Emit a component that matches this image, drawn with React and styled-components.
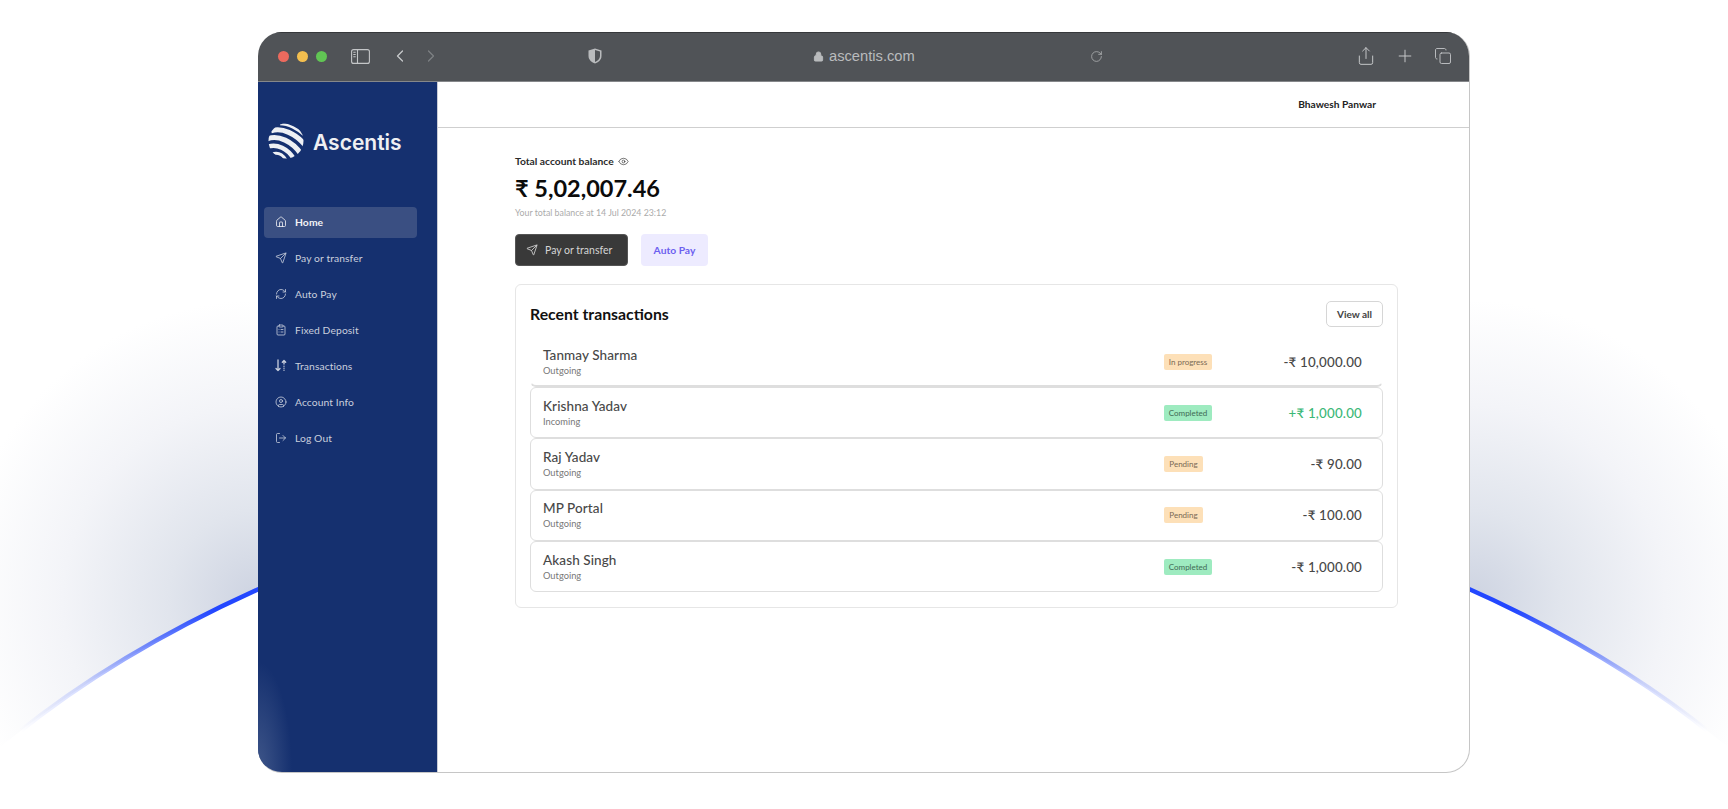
import React from "react";
import styled, { createGlobalStyle } from "styled-components";
import { House, Send, RefreshCw, ClipboardList, CircleUser, LogOut, Eye, ChevronLeft, ChevronRight, Lock, RotateCw, Share, Plus, Copy } from "lucide-react";

const FONT = `"Lato", "Noto Sans", sans-serif`;

const Global = createGlobalStyle`
  html, body { margin: 0; padding: 0; background: #fff; height: 100%; overflow: hidden; }
  body { font-family: ${FONT}; }
  * { box-sizing: border-box; }
`;

const Page = styled.div`
  position: relative;
  width: 1728px;
  height: 809px;
  padding-top: 32px;
  overflow: hidden;
  background: #fff;
`;

const Backdrop = styled.svg`
  position: absolute;
  left: 0;
  top: 0;
`;

const Window = styled.div`
  position: relative;
  width: 1212px;
  height: 741px;
  margin: 0 auto;
  display: flex;
  flex-direction: column;
  border-radius: 24px;
  overflow: hidden;
  background: #fff;
  border: 1px solid #c6c6c6;
  border-top: 0;
  border-left: 0;
`;

const Toolbar = styled.div`
  height: 50px;
  flex: none;
  display: flex;
  align-items: center;
  padding-bottom: 2px;
  background: #505357;
  border-top: 1px solid #36383b;
  border-bottom: 1px solid #85878a;
  color: #c4c6c8;
`;

const Dots = styled.div`
  display: flex;
  gap: 8px;
  margin-left: 20px;
`;

const Dot = styled.span`
  width: 11px;
  height: 11px;
  border-radius: 50%;
  background: ${(p) => p.$c};
`;

const SidebarToggle = styled.svg`
  margin-left: 24px;
  flex: none;
`;

const NavArrows = styled.div`
  display: flex;
  align-items: center;
  gap: 11px;
  margin-left: 20px;
`;

const Shield = styled.svg`
  margin-left: 147px;
  flex: none;
`;

const Address = styled.div`
  margin-left: 211px;
  display: flex;
  align-items: center;
  gap: 5px;
  width: 277px;
  font-family: "Liberation Sans", sans-serif;
  font-size: 14.7px;
  color: #b9bbbd;
`;

const ToolbarRight = styled.div`
  display: flex;
  align-items: center;
  flex: 1;
`;

const ToolGroup = styled.div`
  margin-left: auto;
  margin-right: 17px;
  display: flex;
  align-items: center;
  gap: 19px;
`;

const Body = styled.div`
  flex: 1;
  display: flex;
  min-height: 0;
`;

const Sidebar = styled.aside`
  width: 180px;
  flex: none;
  padding: 42px 6px 0;
  color: #fff;
  border-right: 1px solid #c9ccd6;
  background:
    radial-gradient(ellipse 34px 110px at 0 100%, #3f5689 0%, rgba(63, 86, 137, 0) 100%),
    #15306f;
`;

const Brand = styled.div`
  display: flex;
  align-items: center;
  gap: 9px;
  margin: 0 0 47px 4px;
  height: 36px;
`;

const LogoSvg = styled.svg`
  flex: none;
  margin-bottom: 2px;
`;

const BrandName = styled.span`
  font-family: "Inter", sans-serif;
  font-weight: 600;
  font-size: 21px;
  color: #eff0f3;
`;

const Nav = styled.nav`
  display: flex;
  flex-direction: column;
  gap: 5px;
`;

const NavItem = styled.a`
  height: 31px;
  display: flex;
  align-items: center;
  gap: 8px;
  padding: 0 0 2px 11px;
  width: 153px;
  border-radius: 4px;
  font-size: 10.3px;
  font-weight: ${(p) => (p.$active ? 700 : 400)};
  color: ${(p) => (p.$active ? "#f2f3f6" : "#c9cfdd")};
  background: ${(p) => (p.$active ? "#3a4f82" : "transparent")};
  letter-spacing: 0.1px;

  svg { flex: none; }
`;

const Main = styled.main`
  flex: 1;
  min-width: 0;
  display: flex;
  flex-direction: column;
`;

const TopBar = styled.header`
  height: 46px;
  flex: none;
  display: flex;
  align-items: center;
  justify-content: flex-end;
  padding: 0 93px 2px 0;
  border-bottom: 1px solid #cfcfcf;
  font-size: 10.2px;
  font-weight: 700;
  color: #222;
`;

const Content = styled.div`
  padding: 25px 71px 0 77px;
`;

const BalanceLabel = styled.div`
  display: flex;
  align-items: center;
  gap: 4px;
  height: 16px;
  font-size: 10.3px;
  font-weight: 700;
  color: #2c2c2c;
`;

const Balance = styled.div`
  margin-top: 3px;
  font-size: 23.5px;
  line-height: 32px;
  font-weight: 700;
  color: #0b0b0b;
`;

const BalanceNote = styled.div`
  margin-top: 3px;
  font-size: 8.8px;
  line-height: 12px;
  color: #ababab;
`;

const Actions = styled.div`
  display: flex;
  gap: 13px;
  margin-top: 15px;
`;

const PrimaryButton = styled.button`
  width: 113px;
  height: 32px;
  display: flex;
  align-items: center;
  gap: 7px;
  padding: 0 0 0 10px;
  border: 1px solid #555;
  border-radius: 4px;
  background: #393939;
  color: #d5d5d5;
  font-family: ${FONT};
  font-size: 10.5px;
`;

const SoftButton = styled.button`
  width: 67px;
  height: 32px;
  border: 0;
  border-radius: 4px;
  background: #edebff;
  color: #6c5ff0;
  font-family: ${FONT};
  font-weight: 700;
  font-size: 10.3px;
`;

const Card = styled.section`
  margin-top: 18px;
  height: 324px;
  padding: 15px 14px 14px;
  border: 1px solid #e6e6e6;
  border-radius: 6px;
`;

const CardHead = styled.div`
  display: flex;
  align-items: center;
  justify-content: space-between;
  height: 27px;
`;

const CardTitle = styled.h2`
  margin: 0;
  font-size: 15.8px;
  font-weight: 700;
  color: #111;
`;

const GhostButton = styled.button`
  width: 57px;
  height: 26px;
  border: 1px solid #d6d6d6;
  border-radius: 5px;
  background: #fff;
  color: #444;
  font-family: ${FONT};
  font-weight: 700;
  font-size: 10px;
`;

const Rows = styled.div`
  margin-top: 10px;
  display: flex;
  flex-direction: column;
`;

const Row = styled.div`
  height: ${(p) => (p.$first ? "50px" : "51.3px")};
  display: flex;
  align-items: center;
  padding: 0 20px 0 12px;
  border: 1px solid #dedede;
  border-radius: 6px;
  ${(p) => p.$first && "border-top-color: transparent; border-left-color: transparent; border-right-color: transparent; border-bottom-width: 2px;"}
`;

const Party = styled.div`
  flex: 1;
  display: flex;
  flex-direction: column;
  gap: 2px;
`;

const Name = styled.div`
  font-size: 13.5px;
  line-height: 16px;
  font-weight: 500;
  color: #484848;
  letter-spacing: 0.1px;
`;

const Direction = styled.div`
  font-size: 9.3px;
  line-height: 12px;
  color: #777;
`;

const StatusCell = styled.div`
  width: 88px;
  flex: none;
`;

const Badge = styled.span`
  display: block;
  height: 16px;
  line-height: 16px;
  width: ${(p) => (p.$pending ? "39px" : "48px")};
  text-align: center;
  border-radius: 2px;
  font-size: 8px;
  color: ${(p) => (p.$done ? "#3f6a54" : "#7a6a55")};
  background: ${(p) => (p.$done ? "#9eebc0" : "#fde0b8")};
`;

const Amount = styled.div`
  width: 110px;
  flex: none;
  text-align: right;
  font-size: 13.3px;
  font-weight: 500;
  color: ${(p) => (p.$in ? "#3bb877" : "#474747")};
  letter-spacing: 0.2px;
`;

const LogoMark = () => (
  <LogoSvg width="36" height="36" viewBox="0 0 36 36" aria-hidden="true">
    <defs>
      <clipPath id="globe"><circle cx="18" cy="18" r="17.5" /></clipPath>
    </defs>
    <g clipPath="url(#globe)" fill="none" stroke="#eef0f4" strokeLinecap="butt">
      <path d="M12 1 C20 1 30 6 37 13" strokeWidth="2.6" />
      <path d="M3 8 C14 4 28 11 37 22" strokeWidth="5" />
      <path d="M-1 16 C10 11 25 19 33 31" strokeWidth="5" />
      <path d="M-1 24 C9 20 20 26 26 36" strokeWidth="4.4" />
      <path d="M4 31 C10 29 15 32 18 37" strokeWidth="3" />
    </g>
  </LogoSvg>
);

const TransferIcon = () => (
  <svg width="12" height="13" viewBox="0 0 12 13" fill="none" stroke="currentColor" strokeWidth="1.3" strokeLinecap="round" strokeLinejoin="round">
    <path d="M3 1v10.5M1 9.5l2 2 2-2" />
    <path d="M9 5V1.5M7.3 3.2 9 1.5l1.7 1.7" />
    <path d="M9 7.2v.1M9 9.2v.1M9 11.2v.1" />
  </svg>
);

const navItems = [
  { label: "Home", Icon: House, active: true },
  { label: "Pay or transfer", Icon: Send },
  { label: "Auto Pay", Icon: RefreshCw },
  { label: "Fixed Deposit", Icon: ClipboardList },
  { label: "Transactions", Icon: TransferIcon },
  { label: "Account Info", Icon: CircleUser },
  { label: "Log Out", Icon: LogOut },
];

const rows = [
  { name: "Tanmay Sharma", dir: "Outgoing", status: "In progress", amount: "-₹ 10,000.00", first: true },
  { name: "Krishna Yadav", dir: "Incoming", status: "Completed", amount: "+₹ 1,000.00", income: true },
  { name: "Raj Yadav", dir: "Outgoing", status: "Pending", amount: "-₹ 90.00" },
  { name: "MP Portal", dir: "Outgoing", status: "Pending", amount: "-₹ 100.00" },
  { name: "Akash Singh", dir: "Outgoing", status: "Completed", amount: "-₹ 1,000.00" },
];

const glowStops = (
  <>
    <stop offset="0" stopColor="#cdd3e1" />
    <stop offset="0.3" stopColor="#e1e5ed" />
    <stop offset="0.65" stopColor="#f3f4f8" />
    <stop offset="1" stopColor="#ffffff" />
  </>
);

const lineStops = (
  <>
    <stop offset="0" stopColor="#2347ff" stopOpacity="0" />
    <stop offset="0.35" stopColor="#2347ff" stopOpacity="0.2" />
    <stop offset="0.7" stopColor="#2347ff" stopOpacity="0.65" />
    <stop offset="1" stopColor="#2347ff" />
  </>
);

export default function App() {
  return (
    <Page>
      <Global />
      <Backdrop width="1728" height="809" viewBox="0 0 1728 809" aria-hidden="true">
        <defs>
          <radialGradient id="glowL" gradientUnits="userSpaceOnUse" cx="258" cy="600" r="300">{glowStops}</radialGradient>
          <radialGradient id="glowR" gradientUnits="userSpaceOnUse" cx="1470" cy="600" r="300">{glowStops}</radialGradient>
          <linearGradient id="lineL" gradientUnits="userSpaceOnUse" x1="20" y1="730" x2="215" y2="612">{lineStops}</linearGradient>
          <linearGradient id="lineR" gradientUnits="userSpaceOnUse" x1="1708" y1="730" x2="1513" y2="612">{lineStops}</linearGradient>
        </defs>
        <path d="M0 747 Q120 650 270 584 V250 H0 Z" fill="url(#glowL)" />
        <path d="M1728 747 Q1608 650 1458 584 V250 H1728 Z" fill="url(#glowR)" />
        <path d="M14 736 Q120 650 270 584" fill="none" stroke="url(#lineL)" strokeWidth="4.5" />
        <path d="M1714 736 Q1608 650 1458 584" fill="none" stroke="url(#lineR)" strokeWidth="4.5" />
      </Backdrop>
      <Window>
        <Toolbar>
          <Dots>
            <Dot $c="#ec6a5e" />
            <Dot $c="#f4bf4f" />
            <Dot $c="#61c554" />
          </Dots>
          <SidebarToggle width="19" height="15" viewBox="0 0 19 15" fill="none" stroke="#c4c6c8" strokeWidth="1.1">
            <rect x="0.6" y="0.6" width="17.8" height="13.8" rx="2" />
            <path d="M6.5 0.6v13.8M2.3 3.3h2.4M2.3 5.5h2.4M2.3 7.7h2.4" />
          </SidebarToggle>
          <NavArrows>
            <ChevronLeft size={20} strokeWidth={1.5} color="#c8cacc" />
            <ChevronRight size={20} strokeWidth={1.5} color="#7e8184" />
          </NavArrows>
          <Shield width="14" height="16" viewBox="0 0 14 16">
            <path d="M7 0.5 L13.5 2.5 V8 C13.5 12 10 14.5 7 15.5 C4 14.5 0.5 12 0.5 8 V2.5 Z" fill="#b9bbbd" />
            <path d="M7 2 L12 3.5 V8 C12 11 9.5 13 7 14 Z" fill="#505357" />
          </Shield>
          <Address>
            <Lock size={11} fill="#b9bbbd" strokeWidth={2} />
            ascentis.com
          </Address>
          <ToolbarRight>
            <RotateCw size={13} strokeWidth={1.4} color="#b4b6b8" />
            <ToolGroup>
              <Share size={20} strokeWidth={1.2} />
              <Plus size={20} strokeWidth={1.2} />
              <Copy size={18} strokeWidth={1.2} />
            </ToolGroup>
          </ToolbarRight>
        </Toolbar>
        <Body>
          <Sidebar>
            <Brand>
              <LogoMark />
              <BrandName>Ascentis</BrandName>
            </Brand>
            <Nav>
              {navItems.map(({ label, Icon, active }) => (
                <NavItem key={label} $active={active}>
                  <Icon size={12} strokeWidth={1.6} />
                  {label}
                </NavItem>
              ))}
            </Nav>
          </Sidebar>
          <Main>
            <TopBar>Bhawesh Panwar</TopBar>
            <Content>
              <BalanceLabel>
                Total account balance
                <Eye size={11} strokeWidth={1.4} />
              </BalanceLabel>
              <Balance>₹ 5,02,007.46</Balance>
              <BalanceNote>Your total balance at 14 Jul 2024 23:12</BalanceNote>
              <Actions>
                <PrimaryButton>
                  <Send size={12} strokeWidth={1.7} />
                  Pay or transfer
                </PrimaryButton>
                <SoftButton>Auto Pay</SoftButton>
              </Actions>
              <Card>
                <CardHead>
                  <CardTitle>Recent transactions</CardTitle>
                  <GhostButton>View all</GhostButton>
                </CardHead>
                <Rows>
                  {rows.map((r) => (
                    <Row key={r.name} $first={r.first}>
                      <Party>
                        <Name>{r.name}</Name>
                        <Direction>{r.dir}</Direction>
                      </Party>
                      <StatusCell>
                        <Badge $done={r.status === "Completed"} $pending={r.status === "Pending"}>{r.status}</Badge>
                      </StatusCell>
                      <Amount $in={r.income}>{r.amount}</Amount>
                    </Row>
                  ))}
                </Rows>
              </Card>
            </Content>
          </Main>
        </Body>
      </Window>
    </Page>
  );
}
